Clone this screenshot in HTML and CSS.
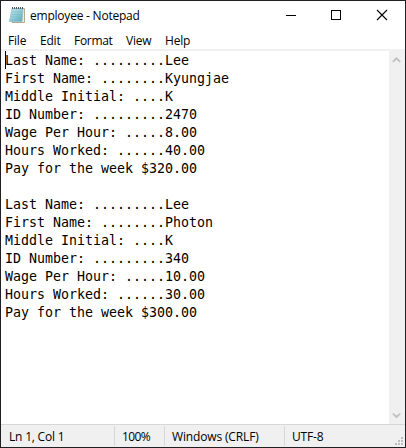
FILE: index.html
```html
<!DOCTYPE html>
<html lang="en">
<head>
<meta charset="utf-8">
<title>employee - Notepad</title>
<link rel="stylesheet" href="styles.css">
</head>
<body>
<div class="window">
  <header class="titlebar">
    <svg class="app-icon" width="17" height="17" viewBox="0 0 17 17">
      <defs><linearGradient id="page" x1="0" y1="0" x2="1" y2="1"><stop offset="0" stop-color="#c4e6ed"/><stop offset=".5" stop-color="#91cbd8"/><stop offset="1" stop-color="#58a7bd"/></linearGradient></defs>
      <path d="M3.5 1.5H15.5V15.5H3Z" fill="#f3ecd9" stroke="#b6a98e"/>
      <path d="M3 1.5H14L13 14.5H.5Z" fill="url(#page)" stroke="#82b9c5" stroke-width=".7"/>
      <path d="M3 5H13M2.7 7.5H12.8M2.4 10H12.6M2.1 12.5H12.4" stroke="#79b6c6" stroke-width=".5"/>
      <path d="M3.5 0V2M5.5 0V2M7.5 0V2M9.5 0V2M11.5 0V2M13.5 0V2" stroke="#4d5a5e" stroke-width="1"/>
    </svg>
    <span class="title">employee - Notepad</span>
    <div class="controls">
      <svg width="45" height="29" viewBox="0 0 45 29" shape-rendering="crispEdges"><path d="M17 14.5H27" stroke="#000"/></svg>
      <svg width="46" height="29" viewBox="0 0 46 29" shape-rendering="crispEdges"><path d="M17.5 9.5H26.5V18.5H17.5Z" fill="none" stroke="#000"/></svg>
      <svg width="46" height="29" viewBox="0 0 46 29"><path d="M17 9L27 19M27 9L17 19" stroke="#000" stroke-width="1.1"/></svg>
    </div>
  </header>
  <nav class="menu">
    <span class="file">File</span><span class="edit">Edit</span><span class="format">Format</span><span class="view">View</span><span class="help">Help</span>
  </nav>
  <main class="editor">
    <pre class="text">Last Name: .........Lee
First Name: ........Kyungjae
Middle Initial: ....K
ID Number: .........2470
Wage Per Hour: .....8.00
Hours Worked: ......40.00
Pay for the week $320.00

Last Name: .........Lee
First Name: ........Photon
Middle Initial: ....K
ID Number: .........340
Wage Per Hour: .....10.00
Hours Worked: ......30.00
Pay for the week $300.00</pre>
    <div class="scrollbar">
      <svg width="16" height="17" viewBox="0 0 16 17"><path d="M4 9.8L7.5 6.3L11 9.8V11.2L7.5 8.6L4 11.2Z" fill="#bfbfbf" stroke="#bfbfbf" stroke-width=".6"/></svg>
      <svg width="16" height="17" viewBox="0 0 16 17"><path d="M4 6.2L7.5 8.8L11 6.2V7.6L7.5 11.1L4 7.6Z" fill="#bfbfbf" stroke="#bfbfbf" stroke-width=".6"/></svg>
    </div>
  </main>
  <footer class="status">
    <span class="cell position"><span>Ln 1, Col 1</span></span>
    <span class="cell percent"><span>100%</span></span>
    <span class="cell ending"><span>Windows (CRLF)</span></span>
    <span class="cell encoding"><span>UTF-8</span></span>
    <svg class="grip" width="8" height="8" viewBox="0 0 8 8" shape-rendering="crispEdges"><path d="M6 0h2v2h-2zM3 3h2v2h-2zM6 3h2v2h-2zM0 6h2v2h-2zM3 6h2v2h-2zM6 6h2v2h-2z" fill="#bfbfbf"/></svg>
  </footer>
</div>
</body>
</html>
```
FILE: styles.css
```css
* { box-sizing: border-box; }
body { margin: 0; overflow: hidden; }
.window {
  width: 406px;
  height: 448px;
  border: 1px solid #202024;
  background: #fff;
  display: flex;
  flex-direction: column;
  font: 12px/16px "Open Sans", "Noto Sans", sans-serif;
  color: #000;
}
.titlebar { height: 30px; display: flex; align-items: flex-start; }
.app-icon { margin: 6px 0 0 8px; }
.title { margin: 7px 0 0 4px; white-space: nowrap; letter-spacing: -.22px; }
.controls { margin: 0 -1px 0 auto; display: flex; }
.menu {
  height: 20px;
  padding: 2px 0 0 7px;
  display: flex;
  border-bottom: 2px solid #f0f0f0;
  letter-spacing: -.2px;
}
.menu span { white-space: nowrap; }
.file { width: 32px; }
.edit { width: 34px; }
.format { width: 52px; letter-spacing: -.3px; }
.view { width: 39px; }
.editor { flex: 1; display: flex; min-height: 0; }
.text {
  flex: 1;
  margin: 0;
  padding: 1px 0 0 4px;
  font: 13.29px/18px "DejaVu Sans Mono", monospace;
  background: linear-gradient(#000, #000) 4px 0 / 1px 18px no-repeat;
}
.scrollbar {
  width: 16px;
  background: #f0f0f0;
  display: flex;
  flex-direction: column;
  justify-content: space-between;
}
.status {
  height: 23px;
  border-top: 1px solid #d7d7d7;
  background: #f0f0f0;
  display: flex;
  align-items: flex-start;
}
.cell {
  height: 20px;
  margin-top: 1px;
  padding: 3px 0 0 7px;
  border-right: 1px solid #d7d7d7;
  white-space: nowrap;
}
.position { width: 114px; padding-left: 8px; letter-spacing: -.2px; }
.percent { width: 50px; letter-spacing: -.6px; }
.ending { width: 120px; letter-spacing: -.15px; }
.encoding { border: 0; letter-spacing: -.15px; }
.grip { margin: 12px 2px 0 auto; }
```
